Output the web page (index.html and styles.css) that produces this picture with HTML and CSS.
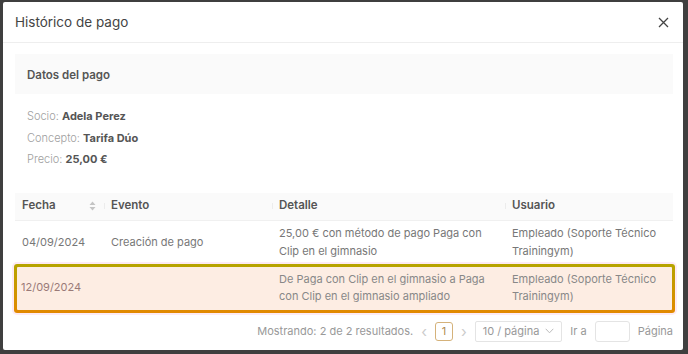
FILE: index.html
```html
<!DOCTYPE html>
<html lang="es">
<head>
    <meta charset="UTF-8">
    <meta name="viewport" content="width=device-width, initial-scale=1.0">
    <title>Histórico de pago</title>
    <link rel="stylesheet" href="styles.css">
</head>
<body>

<div class="modal">
    <div class="modal-header">
        <h1>Histórico de pago</h1>
        <button class="close-btn" aria-label="Cerrar">
            <svg width="11" height="11" viewBox="0 0 11 11"><path d="M1 1 L10 10 M10 1 L1 10" stroke="#444" stroke-width="1.3" fill="none"/></svg>
        </button>
    </div>

    <div class="modal-body">
        <div class="section-title">Datos del pago</div>

        <div class="info">
            <p><span class="label">Socio:</span> <b>Adela Perez</b></p>
            <p><span class="label">Concepto:</span> <b>Tarifa Dúo</b></p>
            <p><span class="label">Precio:</span> <b>25,00 €</b></p>
        </div>

        <div class="table">
            <div class="row head">
                <div class="cell">Fecha
                    <span class="sorter">
                        <svg width="7" height="10" viewBox="0 0 7 10"><path d="M3.5 0.5 L6.5 4 H0.5 Z M3.5 9.5 L6.5 6 H0.5 Z" fill="#c4c4c4"/></svg>
                    </span>
                </div>
                <div class="cell">Evento</div>
                <div class="cell">Detalle</div>
                <div class="cell">Usuario</div>
            </div>
            <div class="row first">
                <div class="cell">04/09/2024</div>
                <div class="cell">Creación de pago</div>
                <div class="cell">25,00 € con método de pago Paga con Clip en el gimnasio</div>
                <div class="cell">Empleado (Soporte Técnico Trainingym)</div>
            </div>
            <div class="highlight">
                <div class="row">
                    <div class="cell">12/09/2024</div>
                    <div class="cell"></div>
                    <div class="cell">De Paga con Clip en el gimnasio a Paga con Clip en el gimnasio ampliado</div>
                    <div class="cell">Empleado (Soporte Técnico Trainingym)</div>
                </div>
            </div>
        </div>

        <div class="pagination">
            <span class="total">Mostrando: 2 de 2 resultados.</span>
            <span class="arrow">&lsaquo;</span>
            <span class="page active">1</span>
            <span class="arrow">&rsaquo;</span>
            <span class="size-select">10 / página
                <svg width="9" height="6" viewBox="0 0 9 6"><path d="M0.7 0.8 L4.5 4.8 L8.3 0.8" stroke="#bbb" stroke-width="1" fill="none"/></svg>
            </span>
            <span class="jump">Ir a</span>
            <span class="jump-input"></span>
            <span class="jump">Página</span>
        </div>
    </div>
</div>

</body>
</html>
```

FILE: styles.css
```css
html, body {
    margin: 0;
    padding: 0;
}

body {
    background: #3f3f3f;
    font-family: 'Inter', 'Noto Sans', sans-serif;
    color: #777;
    font-size: 11px;
    height: 354px;
    overflow: hidden;
}

.modal {
    background: #fff;
    margin: 2px 5px 0 3px;
    height: 348px;
    border-radius: 2px;
    box-sizing: border-box;
}

.modal-header {
    display: flex;
    justify-content: space-between;
    align-items: center;
    height: 40px;
    padding: 0 14px 0 12px;
    border-bottom: 1px solid #eeeeee;
}

.modal-header h1 {
    margin: 0;
    font-size: 13.5px;
    font-weight: 400;
    color: #444;
}

.close-btn {
    border: none;
    background: none;
    padding: 0;
    display: flex;
    cursor: pointer;
}

.modal-body {
    padding: 11px 10px 0 12px;
}

.section-title {
    background: #fafafa;
    height: 40px;
    display: flex;
    align-items: center;
    padding: 2px 0 0 12px;
    box-sizing: border-box;
    font-weight: 600;
    font-size: 11.5px;
    color: #555;
}

.info {
    padding: 12px 12px 0;
}

.info p {
    margin: 0;
    line-height: 21.5px;
}

.info .label {
    color: #a0a0a0;
    font-weight: 300;
}

.info b {
    color: #555;
    font-weight: 700;
}

.table {
    margin-top: 22px;
}

.row {
    display: grid;
    grid-template-columns: 89px 168px 233px 1fr;
    align-items: center;
    min-height: 41px;
    border-bottom: 1px solid #f0f0f0;
    line-height: 17.5px;
}

.row.first {
    min-height: 38px;
    padding-top: 3px;
    border-bottom-color: #fbeaf2;
}

.row .cell {
    padding: 0 7px;
}

.row.head {
    background: #fafafa;
    min-height: 27px;
    font-weight: 600;
    font-size: 11.5px;
    color: #555;
}

.row.head .cell {
    position: relative;
    display: flex;
    justify-content: space-between;
    align-items: center;
}

.row.head .cell + .cell::before {
    content: "";
    position: absolute;
    left: 0;
    top: 6px;
    bottom: 6px;
    width: 1px;
    background: #ececec;
}

.sorter {
    display: flex;
    margin-right: 1px;
}

.highlight {
    margin: 1px -2px 0 -1px;
    padding: 3px;
    border-radius: 3px;
    background: linear-gradient(to bottom, #b6a400, #e28900);
    box-shadow: 0 0 0 2px #fdebf4;
}

.highlight .row {
    background: #fdede3;
    border-bottom: none;
    min-height: 43px;
    grid-template-columns: 87px 168px 233px 1fr;
    border-radius: 1px;
    color: #888;
}

.highlight .row .cell:first-child {
    padding-left: 4px;
    color: #9a7a78;
}

.pagination {
    display: flex;
    justify-content: flex-end;
    align-items: center;
    gap: 8px;
    margin-top: 8px;
    color: #999;
}

.arrow {
    color: #ccc;
    font-size: 15px;
    line-height: 1;
}

.page {
    width: 16px;
    height: 17px;
    border: 1px solid #d5b27a;
    border-radius: 3px;
    display: flex;
    justify-content: center;
    align-items: center;
    color: #b08a50;
}

.size-select {
    display: flex;
    align-items: center;
    gap: 6px;
    height: 19px;
    padding: 0 7px;
    border: 1px solid #e4e4e4;
    border-radius: 2px;
    color: #999;
}

.jump-input {
    width: 33px;
    height: 19px;
    border: 1px solid #e4e4e4;
    border-radius: 3px;
}
```
